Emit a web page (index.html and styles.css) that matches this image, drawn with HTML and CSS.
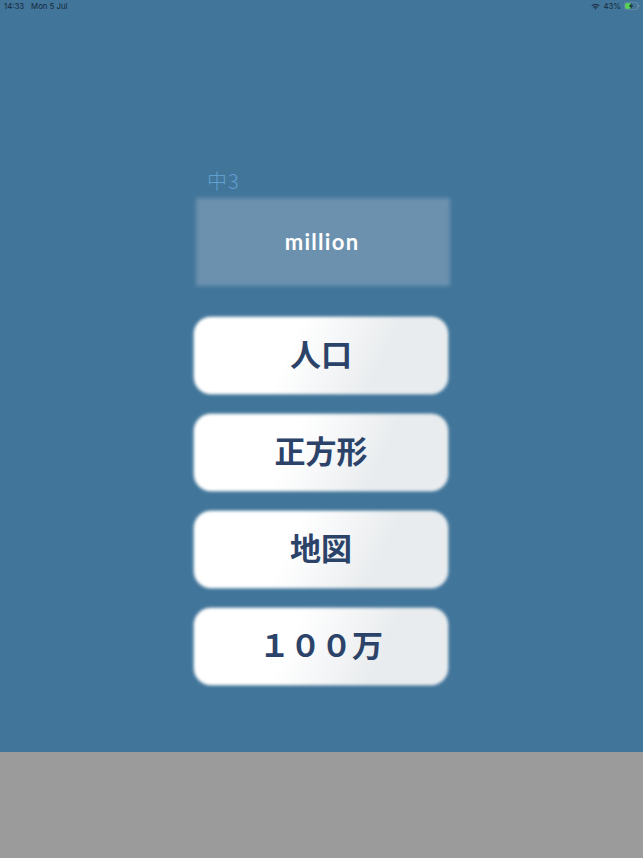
FILE: index.html
```html
<!DOCTYPE html>
<html lang="ja">
<head>
<meta charset="UTF-8" />
<meta name="viewport" content="width=device-width, initial-scale=1" />
<title>million</title>
<link rel="stylesheet" href="styles.css">
</head>
<body>
<div id="tela">
    <div id="statusBar">
        <div class="statusEsq">
            <span>14:33</span>
            <span>Mon 5 Jul</span>
        </div>
        <div class="statusDir">
            <svg class="wifi" width="9" height="7" viewBox="0 0 9 7">
                <path d="M0.3 2.4a6 6 0 0 1 8.4 0L7.8 3.3a4.7 4.7 0 0 0-6.6 0z" fill="#1c2f45"/>
                <path d="M2 4.1a3.6 3.6 0 0 1 5 0L6.1 5a2.3 2.3 0 0 0-3.2 0z" fill="#1c2f45"/>
                <path d="M3.5 5.6a1.4 1.4 0 0 1 2 0L4.5 6.7z" fill="#1c2f45"/>
            </svg>
            <span>43%</span>
            <svg class="bateria" width="16" height="8" viewBox="0 0 16 8">
                <rect x="0.4" y="0.4" width="13.2" height="7.2" rx="1.8" fill="none" stroke="#6d8ea6" stroke-width="0.8"/>
                <rect x="1.2" y="1.2" width="6" height="5.6" rx="1" fill="#58d552"/>
                <rect x="14.2" y="2.6" width="1.2" height="2.8" rx="0.6" fill="#6d8ea6"/>
                <path d="M8 0.8L4.6 4.5H6.8L6 7.2L9.4 3.5H7.2z" fill="#16283a"/>
            </svg>
        </div>
    </div>

    <div id="conteudo">
        <div id="nivel">中3</div>
        <div id="palavra"><span>million</span></div>
        <div id="opcoes">
            <div class="botao"><span>人口</span></div>
            <div class="botao"><span>正方形</span></div>
            <div class="botao"><span>地図</span></div>
            <div class="botao"><span>１００万</span></div>
        </div>
    </div>
</div>
<div id="rodape"></div>
</body>
</html>
```

FILE: styles.css
```css
body{
    margin: 0;
    padding: 0;
    width: 643px;
    height: 858px;
    overflow: hidden;
    background-color: #9b9b9b;
    font-family: "Noto Sans CJK JP", "Noto Sans", sans-serif;
}
#tela{
    height: 752px;
    background-color: #41759a;
    overflow: hidden;
}
#statusBar{
    height: 12px;
    padding: 0 3px 0 4px;
    display: flex;
    justify-content: space-between;
    align-items: center;
    font-family: "Inter", "Liberation Sans", sans-serif;
    font-size: 7.8px;
    color: #16283c;
}
.statusEsq{
    display: flex;
    gap: 7px;
}
.statusDir{
    display: flex;
    align-items: center;
    gap: 3px;
}
#conteudo{
    width: 258px;
    margin: 158px 0 0 194px;
}
#nivel{
    height: 28px;
    margin-left: 13px;
    font-size: 20px;
    font-weight: 300;
    letter-spacing: 1px;
    line-height: 22px;
    color: #62a0d0;
}
#palavra{
    position: relative;
    width: 254px;
    height: 88px;
    margin-left: 2px;
    display: flex;
    justify-content: center;
    align-items: center;
    font-family: "Lato", "Noto Sans", sans-serif;
    font-size: 22px;
    font-weight: 700;
    letter-spacing: 1.3px;
    color: white;
}
#palavra::before{
    content: "";
    position: absolute;
    inset: 0;
    background-color: #6b91ae;
    filter: blur(2px);
}
#palavra span{
    position: relative;
    top: -1px;
    left: -1px;
}
#opcoes{
    margin-top: 31px;
    display: flex;
    flex-direction: column;
    gap: 20px;
}
.botao{
    position: relative;
    width: 254px;
    height: 77px;
    display: flex;
    justify-content: center;
    align-items: center;
    font-size: 31px;
    font-weight: 700;
    color: #2c4369;
}
.botao::before{
    content: "";
    position: absolute;
    inset: 0;
    border-radius: 17px;
    background: linear-gradient(115deg, white 38%, #e9ecee 72%, #e9ecee);
    box-shadow: 0 0 2px white;
    filter: blur(1.5px);
}
.botao span{
    position: relative;
    top: -3px;
}
```
